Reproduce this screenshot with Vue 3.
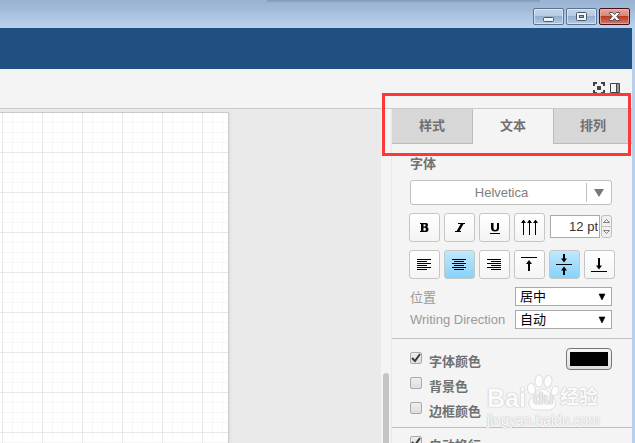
<script setup>
import { ref } from 'vue'

const tabs = ['样式', '文本', '排列']
const activeTab = ref(1)
const font = ref('Helvetica')
const size = ref('12 pt')
const position = ref('居中')
const direction = ref('自动')
const align = ref('center')
const valign = ref('middle')

const aligns = [
  { id: 'left', label: '左对齐', path: 'M0 1.5h14M0 3.5h10M0 5.5h14M0 7.5h10M0 9.5h14M0 11.5h10' },
  { id: 'center', label: '水平居中', path: 'M0 1.5h14M2 3.5h10M0 5.5h14M2 7.5h10M0 9.5h14M2 11.5h10' },
  { id: 'right', label: '右对齐', path: 'M0 1.5h14M4 3.5h10M0 5.5h14M4 7.5h10M0 9.5h14M4 11.5h10' },
]
const colors = ref([
  { id: 'c-font', label: '字体颜色', on: true, swatch: true },
  { id: 'c-back', label: '背景色', on: false },
  { id: 'c-border', label: '边框颜色', on: false },
])
const wrap = ref(true)
</script>

<template>
  <div class="window">
    <header class="titlebar">
      <div class="shade"></div>
      <div class="controls">
        <button class="win" aria-label="最小化">
          <svg width="13" height="13" viewBox="0 0 13 13"><rect x="1.5" y="7.5" width="10" height="4" rx="1" fill="#f4f4f4" stroke="#49566b" /></svg>
        </button>
        <button class="win" aria-label="最大化">
          <svg width="13" height="13" viewBox="0 0 13 13"><rect x="1.5" y="2.5" width="10" height="8" rx="1" fill="#f4f4f4" stroke="#49566b" /><rect x="4.5" y="5.5" width="4" height="2" fill="#8fadd0" stroke="#49566b" /></svg>
        </button>
        <button class="win close" aria-label="关闭">
          <svg width="13" height="13" viewBox="0 0 13 13"><path d="M1.5 2.5h3L6.500 4.500 8.500 2.500h3v1L8.800 6.500l2.700 3v1h-3l-2-2-2 2h-3v-1l2.700-3-2.700-3z" fill="#f4f4f4" stroke="#504b59" /></svg>
        </button>
      </div>
    </header>

    <div class="app">
      <div class="banner"></div>
      <div class="toolbar">
        <button class="tool" aria-label="全屏">
          <svg width="12" height="12" viewBox="0 0 12 12"><path d="M0 0h4v2H2v2H0zM8 0h4v4h-2V2H8zM0 8h2v2h2v2H0zM10 8h2v4H8v-2h2zM4 4h4v4H4z" fill="#444" /></svg>
        </button>
        <button class="tool" aria-label="格式面板">
          <svg width="10" height="12" viewBox="0 0 10 12"><rect x="7" y="2" width="2" height="8" fill="#999" /><path d="M.5 1.500h9v9h-9zM6.500 1v10" fill="none" stroke="#444" /></svg>
        </button>
      </div>

      <main class="work">
        <div class="canvas"><div class="paper"></div></div>
        <div class="gutter"><div class="thumb"></div></div>

        <aside class="panel">
          <nav class="tabs">
            <button v-for="(t, i) in tabs" :key="t" class="tab" :class="{ active: i === activeTab }" @click="activeTab = i">{{ t }}</button>
          </nav>

          <section class="text">
            <label class="heading" for="font">字体</label>
            <div class="font">
              <select id="font" v-model="font"><option>Helvetica</option></select>
              <span class="drop"><svg width="10" height="8" viewBox="0 0 10 8"><path d="M0 0h10L5 8z" fill="#77787a" /></svg></span>
            </div>

            <div class="row">
              <button class="btn" aria-label="粗体"><svg width="15" height="15" viewBox="0 0 15 15"><path fill-rule="evenodd" d="M3 3h6.500Q11 3 11 5q0 1.500-1 2 1.500.6 1.500 2.300Q11.500 12 9 12H3v-1h1V4H3zM6.500 4.300v2.200h1q1.200 0 1.200-1.100T7.500 4.300zM6.500 7.700v3h1.200q1.200 0 1.200-1.500T7.700 7.700z" /></svg></button>
              <button class="btn" aria-label="斜体"><svg width="15" height="15" viewBox="0 0 15 15"><path d="M6 3h7v1h-1.500L7.500 11H9v1H3v-1h1.700L8.700 4H6z" /></svg></button>
              <button class="btn" aria-label="下划线"><svg width="15" height="15" viewBox="0 0 15 15"><path d="M3 13h10v1H3zM4 3h2.500v5q0 2 1.700 2T10 8V3h2v5q0 3.500-3.900 3.500T4 8z" /></svg></button>
              <button class="btn" aria-label="竖排"><svg width="17" height="15" viewBox="0 0 17 15"><path shape-rendering="crispEdges" d="M2 0h1v15H2zM8 0h1v15H8zM14 0h1v15h-1z" /><path d="M2.500-.5L5 3H0zM8.500-.5L11 3H6zM14.500-.5L17 3h-5z" /></svg></button>
              <div class="size">
                <input v-model="size" aria-label="字号" />
                <div class="spin">
                  <button aria-label="增大"><svg width="7" height="4" viewBox="0 0 7 4"><path d="M.5 3.500h6l-3-3z" fill="#eee" stroke="#666" stroke-width=".8" /></svg></button>
                  <button aria-label="减小"><svg width="7" height="4" viewBox="0 0 7 4"><path d="M.5.500h6l-3 3z" fill="#eee" stroke="#666" stroke-width=".8" /></svg></button>
                </div>
              </div>
            </div>

            <div class="row">
              <button v-for="a in aligns" :key="a.id" class="btn" :class="{ on: align === a.id }" :aria-label="a.label" @click="align = a.id">
                <svg width="15" height="13" viewBox="0 0 15 13" shape-rendering="crispEdges"><path :d="a.path" stroke="#000" /></svg>
              </button>
              <button class="btn" :class="{ on: valign === 'top' }" aria-label="顶端" @click="valign = 'top'"><svg width="17" height="19" viewBox="0 0 17 19"><path d="M0 2.500h16" stroke="#000" /><path d="M7 7h2v9H7z" /><path d="M8 5l3 4H5z" /></svg></button>
              <button class="btn" :class="{ on: valign === 'middle' }" aria-label="垂直居中" @click="valign = 'middle'"><svg width="17" height="21" viewBox="0 0 17 21"><path d="M0 10.500h16" stroke="#000" /><path d="M7 0h2v5H7zM7 16h2v5H7z" /><path d="M8 8.500L5 4.500h6zM8 12.500l3 4H5z" /></svg></button>
              <button class="btn" :class="{ on: valign === 'bottom' }" aria-label="底端" @click="valign = 'bottom'"><svg width="17" height="19" viewBox="0 0 17 19"><path d="M0 16.500h16" stroke="#000" /><path d="M7 3h2v8H7z" /><path d="M8 14.500l-3-4h6z" /></svg></button>
            </div>

            <div class="field">
              <label for="pos">位置</label>
              <div class="pick"><select id="pos" v-model="position"><option>居中</option></select><svg width="8" height="7" viewBox="0 0 8 7"><path d="M1 1h6L4 7z" stroke="#000" stroke-width=".6" /></svg></div>
            </div>
            <div class="field">
              <label for="dir">Writing Direction</label>
              <div class="pick"><select id="dir" v-model="direction"><option>自动</option></select><svg width="8" height="7" viewBox="0 0 8 7"><path d="M1 1h6L4 7z" stroke="#000" stroke-width=".6" /></svg></div>
            </div>
          </section>

          <section class="checks">
            <div v-for="c in colors" :key="c.id" class="check">
              <input :id="c.id" v-model="c.on" type="checkbox" />
              <svg v-if="c.on" class="tick" width="12" height="12" viewBox="0 0 12 12"><path d="M2 6l3 3 5-7" /></svg>
              <label :for="c.id">{{ c.label }}</label>
              <button v-if="c.swatch" class="swatch" aria-label="选择颜色"><span></span></button>
            </div>
          </section>
          <section class="checks last">
            <div class="check">
              <input id="wrap" v-model="wrap" type="checkbox" />
              <svg v-if="wrap" class="tick" width="12" height="12" viewBox="0 0 12 12"><path d="M2 6l3 3 5-7" /></svg>
              <label for="wrap">自动换行</label>
            </div>
          </section>
        </aside>
      </main>
    </div>

    <div class="mark"></div>
    <div class="watermark">
      <div class="brand">
        <span>Bai</span>
        <span class="paw">
          <svg width="34" height="37" viewBox="0 0 32 37"><g fill="#fdfdfd" stroke="#dedede"><ellipse cx="4.500" cy="15" rx="4" ry="5.500" transform="rotate(-12 4.500 15)" /><ellipse cx="12" cy="7" rx="4" ry="6" /><ellipse cx="21" cy="7.500" rx="4" ry="6" transform="rotate(10 21 7.500)" /><ellipse cx="28" cy="17" rx="3.500" ry="5" transform="rotate(20 28 17)" /><path d="M16 15c5 0 7 6 11 9 4 4 1 12-5 12H9c-7 0-9-8-5-12 4-3 7-9 12-9z" /></g></svg>
          <b>du</b>
        </span>
        <span class="cn">经验</span>
      </div>
      <div class="site">jingyan.baidu.com</div>
    </div>
  </div>
</template>

<style>
body {
  margin: 0;
  overflow: hidden;
}
</style>

<style scoped>
* {
  box-sizing: border-box;
}
button {
  padding: 0;
  border: 0;
  background: none;
  font: inherit;
  color: inherit;
}
svg {
  display: block;
  flex: none;
}
.window {
  position: relative;
  display: flex;
  flex-direction: column;
  height: 100vh;
  overflow: hidden;
  background: #b7d0eb;
  font-family: "Liberation Sans", "Noto Sans CJK SC", sans-serif;
  font-size: 13px;
}
.titlebar {
  position: relative;
  flex: none;
  height: 28px;
  padding: 8px 5px 0;
  background: linear-gradient(#98b4d2, #a1bbd7 36%, #a9c3e0 50%, #b9d2ec);
}
.shade {
  position: absolute;
  top: 0;
  left: 42%;
  right: 15%;
  height: 3px;
  background: linear-gradient(rgba(90, 110, 135, 0.4), rgba(90, 110, 135, 0));
}
.controls {
  display: flex;
  justify-content: flex-end;
  gap: 2px;
}
.win {
  display: flex;
  align-items: center;
  justify-content: center;
  width: 31px;
  height: 17px;
  border: 1px solid #5f7391;
  border-radius: 2px;
  background: linear-gradient(#c3d5e9, #b5cbe3 48%, #93afcf 50%, #b1cae6);
  box-shadow: inset 0 0 0 1px rgba(225, 238, 250, 0.7);
}
.close {
  border-color: #47101c;
  background: linear-gradient(#e5a89d, #d98878 45%, #b93c24 50%, #d27a66);
  box-shadow: inset 0 0 0 1px rgba(245, 190, 180, 0.6);
}
.app {
  display: flex;
  flex: 1;
  flex-direction: column;
  min-height: 0;
  margin-right: 3px;
  background: #f4f4f4;
}
.banner {
  flex: none;
  height: 41px;
  background: #205081;
}
.toolbar {
  display: flex;
  flex: none;
  justify-content: flex-end;
  align-items: flex-start;
  gap: 5px;
  height: 40px;
  padding: 13px 12px 0;
  border-bottom: 1px solid #cacaca;
}
.work {
  display: flex;
  flex: 1;
  min-height: 0;
}
.canvas {
  flex: 1;
  padding-top: 3px;
  background: #eaeaea;
}
.paper {
  width: 60%;
  height: 100%;
  border: 1px solid #cacaca;
  border-width: 1px 1px 0 0;
  box-shadow: 2px 0 2px rgba(0, 0, 0, 0.04);
  background-color: #fff;
  background-image:
    linear-gradient(90deg, #e8e8e8 1px, transparent 1px),
    linear-gradient(#e8e8e8 1px, transparent 1px),
    linear-gradient(90deg, #f7f7f7 1px, transparent 1px),
    linear-gradient(#f7f7f7 1px, transparent 1px);
  background-size: 40px 40px, 40px 40px, 10px 10px, 10px 10px;
  background-position: 2px 39px, 2px 39px, 2px 9px, 2px 9px;
}
.gutter {
  display: flex;
  flex: none;
  align-items: flex-end;
  width: 11px;
  padding-left: 2px;
  border-right: 1px solid #e9e9e9;
}
.thumb {
  width: 6px;
  height: 21%;
  border-radius: 3px 3px 0 0;
  background: #c5c5c5;
}
.panel {
  flex: none;
  width: 240px;
  overflow: hidden;
  color: #707070;
}
.tabs {
  display: grid;
  grid-template-columns: 81px 80px 1fr;
  height: 35px;
}
.tab {
  padding-bottom: 4px;
  border: 1px solid #bcbcbc;
  border-width: 0 0 1px 1px;
  background: #d7d7d7;
  font-weight: bold;
}
.tab:first-child {
  border-width: 0 1px 1px 0;
}
.tab.active {
  border: 0;
  background: #f4f4f4;
}
.text {
  padding: 11px 17px 9px;
  border-bottom: 1px solid #c0c0c0;
}
.heading {
  display: block;
  height: 25px;
  padding-left: 1px;
  line-height: 18px;
  font-weight: bold;
}
.font {
  display: flex;
  width: 202px;
  height: 25px;
  margin: 0 0 8px 1px;
  border: 1px solid #c0c0c0;
  border-radius: 3px;
  background: #fff;
}
.font select {
  flex: 1;
  padding: 0 0 0 6px;
  border: 0;
  background: none;
  appearance: none;
  color: #808080;
  font: inherit;
  text-align-last: center;
}
.drop {
  display: flex;
  align-items: center;
  justify-content: center;
  width: 25px;
  margin: 2px 0;
  border-left: 1px solid #c0c0c0;
}
.row {
  display: flex;
  gap: 4px;
  margin-bottom: 8px;
}
.btn {
  display: flex;
  flex: none;
  align-items: center;
  justify-content: center;
  width: 31px;
  height: 29px;
  border: 1px solid #c6c6c6;
  border-radius: 3px;
  background: linear-gradient(#fff, #f4f4f4);
}
.on {
  background: linear-gradient(#c1e8fd, #86d1fb);
}
.size {
  display: flex;
  align-items: center;
  gap: 1px;
  width: 62px;
  height: 27px;
  margin-left: 1px;
}
.size input {
  width: 50px;
  height: 23px;
  padding: 0 1px 0 0;
  border: 1px solid #aaa;
  background: #fff;
  color: #333;
  font: inherit;
  text-align: right;
}
.spin {
  display: flex;
  flex-direction: column;
  width: 11px;
  height: 23px;
  border: 1px solid #c0c0c0;
  border-radius: 3px;
  background: #f0f0f0;
}
.spin button {
  display: flex;
  flex: 1;
  align-items: center;
  justify-content: center;
}
.spin button + button {
  border-top: 1px solid #c0c0c0;
}
.field {
  display: flex;
  align-items: center;
  width: 203px;
  height: 19px;
  padding-left: 1px;
  color: #9a9a9a;
}
.field + .field {
  margin-top: 4px;
}
.field label {
  flex: 1;
  white-space: nowrap;
}
.pick {
  display: flex;
  align-items: center;
  width: 97px;
  height: 19px;
  padding-right: 5px;
  border: 1px solid #a9a9a9;
  background: #fff;
}
.pick select {
  flex: 1;
  height: 17px;
  padding: 0 0 0 4px;
  border: 0;
  background: none;
  appearance: none;
  color: #000;
  font: inherit;
  line-height: 17px;
}
.checks {
  padding: 9px 20px 4px 18px;
  border-bottom: 1px solid #c0c0c0;
}
.check {
  position: relative;
  display: flex;
  align-items: flex-start;
  height: 25px;
}
.check input {
  width: 12px;
  height: 12px;
  margin: 4px 7px 0 0;
  border: 1px solid #aaa;
  border-radius: 2px;
  background: linear-gradient(#eee, #dedede);
  appearance: none;
}
.tick {
  position: absolute;
  top: 4px;
  left: 0;
  pointer-events: none;
}
.tick path {
  fill: none;
  stroke: #3c3c3c;
  stroke-width: 2;
}
.check label {
  flex: 1;
  padding-top: 5px;
  line-height: 18px;
  font-weight: bold;
}
.swatch {
  width: 46px;
  height: 22px;
  padding: 3px;
  border: 1px solid #777;
  border-radius: 4px;
  background: linear-gradient(#f5f5f5, #dedede);
}
.swatch span {
  display: block;
  height: 14px;
  background: #000;
}
.checks.last {
  padding-top: 4px;
  border-bottom: 0;
}
.mark {
  position: absolute;
  top: 93px;
  right: 4px;
  width: 249px;
  height: 63px;
  border: 3px solid #fc3838;
}
.watermark {
  position: absolute;
  top: 374px;
  right: 12px;
  width: 136px;
  color: #fbfbfb;
  font-weight: bold;
  text-shadow: 0 0 1px #c8c8c8, 0 0 1px #c8c8c8, 0 0 2px #d2d2d2;
  pointer-events: none;
}
.brand {
  display: flex;
  align-items: flex-end;
  height: 37px;
  font-size: 25px;
  line-height: 26px;
}
.paw {
  position: relative;
}
.paw b {
  position: absolute;
  bottom: 2px;
  left: 7px;
  font-size: 17px;
  line-height: 20px;
  color: #e8e8e8;
}
.cn {
  font-size: 19px;
}
.site {
  font-size: 14px;
  font-weight: normal;
  line-height: 18px;
}
</style>
